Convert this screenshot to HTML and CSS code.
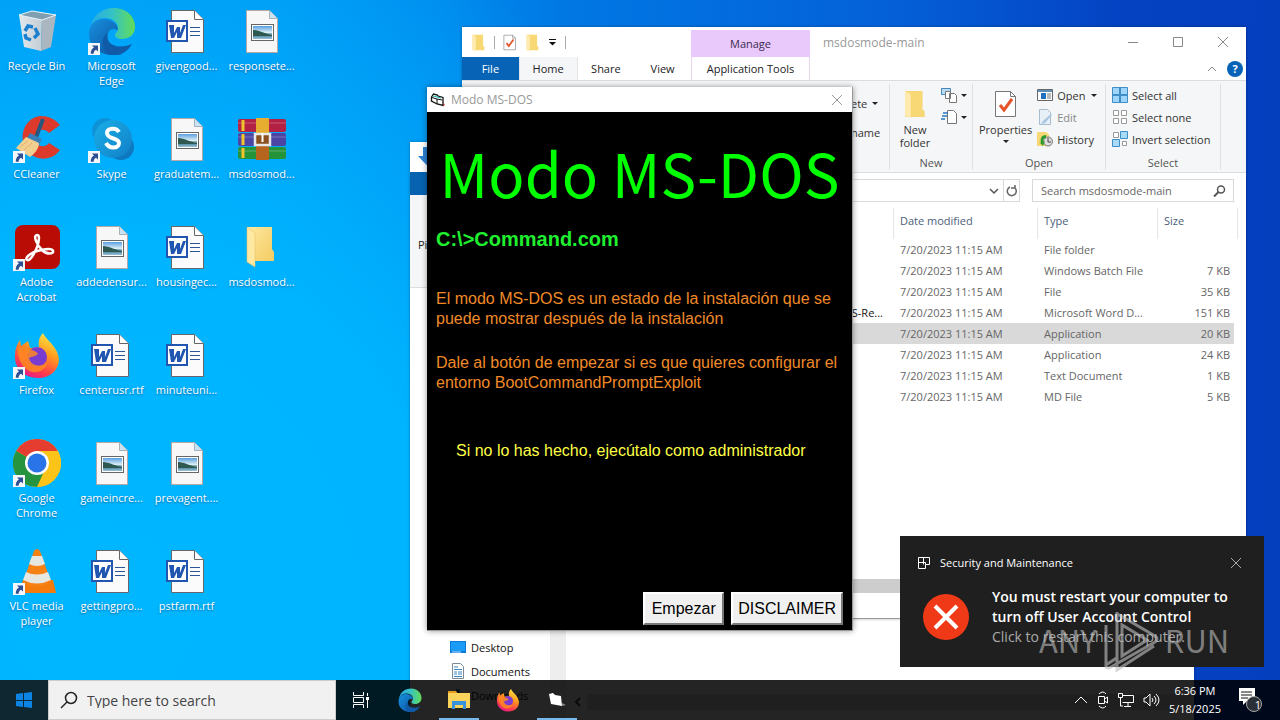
FILE: index.html
```html
<!DOCTYPE html>
<html lang="en">
<head>
<meta charset="utf-8">
<title>Desktop</title>
<link rel="stylesheet" href="styles.css">
</head>
<body>
<svg class="defs" aria-hidden="true">
  <defs>
    <linearGradient id="edgeA" x1="0" y1="0" x2="1" y2="0"><stop offset="0" stop-color="#25a9e8"/><stop offset=".5" stop-color="#35c3c5"/><stop offset="1" stop-color="#63dc55"/></linearGradient>
    <linearGradient id="edgeB" x1="0" y1="0" x2="1" y2="1"><stop offset="0" stop-color="#1691df"/><stop offset="1" stop-color="#0d4f9e"/></linearGradient>
    <linearGradient id="ff" x1=".8" y1="0" x2=".3" y2="1"><stop offset="0" stop-color="#fff04a"/><stop offset=".4" stop-color="#ff9a1f"/><stop offset=".75" stop-color="#ff3f4a"/><stop offset="1" stop-color="#e5178a"/></linearGradient>
    <linearGradient id="sky" x1="0" y1="0" x2="0" y2="1"><stop offset="0" stop-color="#5a9fe0"/><stop offset=".5" stop-color="#dbeef4"/><stop offset=".55" stop-color="#8fb6c4"/><stop offset=".75" stop-color="#4f8a9c"/><stop offset="1" stop-color="#9cc4de"/></linearGradient>
    <linearGradient id="skype" x1="0" y1="0" x2="1" y2="1"><stop offset="0" stop-color="#1aaee8"/><stop offset="1" stop-color="#1180c8"/></linearGradient>
    <linearGradient id="fold" x1="0" y1="0" x2="1" y2="1"><stop offset="0" stop-color="#ffe9a0"/><stop offset="1" stop-color="#f3cb62"/></linearGradient>
    <linearGradient id="bin" x1="0" y1="0" x2="1" y2="0"><stop offset="0" stop-color="#e3e9ed"/><stop offset="1" stop-color="#c3cdd4"/></linearGradient>

    <symbol id="shortcut" viewBox="0 0 12 12"><rect width="12" height="12" fill="#f4f7fa"/><path d="M4 2.500h6v6L8 6.700C6.300 7.600 5.600 9 5.700 10.700H2.800C2.600 8 3.800 5.800 6 4.600z" fill="#2c4f94"/></symbol>
    <symbol id="i-bin" viewBox="0 0 48 48"><path d="M6 8l23 5-1 31-17-4z" fill="url(#bin)"/><path d="M29 13l14-5-5 32-10 4z" fill="#aab7c0"/><path d="M6 8l13-4 24 4-14 5z" fill="#7f9eb0" stroke="#eef5f8"/><g fill="none" stroke="#1d80cf" stroke-width="3.500"><path d="M12 24l3-5 5 1M22 21l3 6-4 4M18 33l-5-2-1-4"/></g></symbol>
    <symbol id="i-edge" viewBox="0 0 48 48"><path d="M2 22C4 8 14 1 26 1c13 0 21 9 21 19 0 7-5 12-13 12-5 0-7-2-7-4 0-2 3-3 3-7 0-5-5-10-13-10C9 11 4 15 2 22z" fill="url(#edgeA)"/><path d="M1 25C2 17 8 12 16 12c8 0 14 5 14 11-8-3-11 2-10 9 1 8 7 14 15 15C14 52 0 41 1 25z" fill="url(#edgeB)"/><path d="M19 26c-2 9 7 18 25 11-4 7-10 11-18 11C13 47 12 32 19 26z" fill="#105aa7"/></symbol>
    <symbol id="i-word" viewBox="0 0 48 48"><path d="M8.500 3.500h23l9 9v33h-32z" fill="#fbfbfb" stroke="#666"/><path d="M31.500 3.500v9h9" fill="#fff" stroke="#666"/><path d="M27 20.500h10M27 24.500h10M27 28.500h10" stroke="#2b579a" stroke-width="1.200"/><rect x="4" y="14" width="20" height="20" fill="#fff" stroke="#2156b0" stroke-width="2"/><path d="M6 18h5v8l3-6h3v6l3-8h3l-5 13h-4v-6l-3 6H8z" fill="#2156b0"/></symbol>
    <symbol id="i-pic" viewBox="0 0 48 48"><path d="M8.500 3.500h23l8 8v34h-31z" fill="#f7f7f8" stroke="#b6a6a6"/><path d="M31.500 3.500v8h8" fill="#c9e3f2" stroke="#a6b2ba"/><rect x="13.500" y="17.500" width="22" height="16" fill="#fff" stroke="#666"/><rect x="15" y="19" width="19" height="13" fill="url(#sky)"/><path d="M15 23c6 0 12 4 19 5v1H15z" fill="#2f5950"/></symbol>
    <symbol id="i-cc" viewBox="0 0 48 48"><path d="M47 10C42 4 35 1 28 1 16 2 8 13 10 26c2 12 13 20 25 17 5-1 9-4 12-8L36 28c-5 6-13 3-14-4-1-8 8-13 14-6z" fill="#dd3a2c"/><path d="M30 4l-8 21" stroke="#28577e" stroke-width="4"/><path d="M17 18l12 6-3 6-13-5z" fill="#3a80b8"/><path d="M13 22l13 6c0 6-5 11-9 14L3 33z" fill="#f3cf8f"/><path d="M15 26l-8 6M19 28l-8 7" stroke="#dcb274"/></symbol>
    <symbol id="i-skype" viewBox="0 0 48 48"><circle cx="17" cy="16" r="13" fill="#0d92d8"/><circle cx="33" cy="32" r="13" fill="#0e78c0"/><circle cx="25" cy="24" r="19" fill="url(#skype)"/><path d="M31 17c-3-5-12-4-12 1 0 7 12 4 12 10 0 6-10 6-13 0" fill="none" stroke="#fff" stroke-width="4"/></symbol>
    <symbol id="i-rar" viewBox="0 0 48 48"><rect y="4" width="48" height="13" rx="2" fill="#b32244"/><rect y="18" width="48" height="13" rx="2" fill="#4c45a4"/><rect y="32" width="48" height="12" rx="2" fill="#25933a"/><path d="M0 8h48M0 22h48M0 36h48" stroke="#fff" opacity=".25"/><path d="M5 5v11M5 19v11M5 33v10" stroke="#f1c42c" stroke-width="3"/><rect x="18" y="3" width="13" height="42" fill="#b5651e"/><path d="M18 3h13v16H18z" fill="#e6ad31"/><path d="M17 19h15v11H17z" fill="#8d5020" stroke="#e8e8e8" stroke-width="2.500"/><path d="M24.500 18v9" stroke="#fff" stroke-width="2"/></symbol>
    <symbol id="i-pdf" viewBox="0 0 48 48"><rect x="2" y="2" width="45" height="44" rx="8" fill="#b80c05"/><path d="M24 12c-4 0-1 9 5 15 5 5 12 4 11 1-1-4-19-1-25 5-4 4 0 6 3 2 4-5 8-14 8-20 0-2-1-3-2-3z" fill="none" stroke="#fff" stroke-width="2.500"/></symbol>
    <symbol id="i-folder" viewBox="0 0 48 48"><path d="M9 4h25v22l2 3v9H17z" fill="url(#fold)"/><path d="M9 4l8 6v34l-8-5z" fill="#ffe8a2" stroke="#e4bd63" stroke-width=".500"/></symbol>
    <symbol id="i-ff" viewBox="0 0 48 48"><path d="M30 2c2 5 9 10 13 17 8 14-2 28-18 28C11 47 1 37 2 24c0-6 2-11 5-15l1 6 7-5 2 7c4 0 6-1 9-1-1-5 0-10 4-14z" fill="url(#ff)"/><circle cx="24" cy="26" r="10" fill="#7a3bd0"/><path d="M5 16c4 1 9 0 14 3 3 1 5 2 6 4-3 3-6 2-9 4 2 9 14 10 19 3-2 11-15 15-23 7C7 32 4 24 5 16z" fill="#ff8a20" opacity=".85"/></symbol>
    <symbol id="i-chrome" viewBox="0 0 48 48"><circle cx="24" cy="24" r="24" fill="#fcc419"/><path d="M24 24L3.200 12A24 24 0 0 1 44.800 12z" fill="#e53e30"/><path d="M3.200 12A24 24 0 0 0 24 48l9-20-9-4z" fill="#26943e"/><path d="M24 12h20.800A24 24 0 0 1 24 48l10-18z" fill="#fcc419"/><circle cx="24" cy="24" r="12" fill="#fff"/><circle cx="24" cy="24" r="9.500" fill="#2a74ea"/></symbol>
    <symbol id="i-vlc" viewBox="0 0 48 48"><path d="M10 33h30l3 13H5z" fill="#f57c0c"/><path d="M21 4q3-4 6 0l11 31q-14 9-28 0z" fill="#f68115"/><path d="M19 9h10l3 8q-8 4-16 0zM13 25q11 5 22 0l3 8q-14 7-28 0z" fill="#e7e7e2"/></symbol>
    <symbol id="i-page" viewBox="0 0 24 28"><path d="M1.500 1.500h15l5 5v20h-20z" fill="#fff" stroke="#777"/><path d="M16.500 1.500v5h5" fill="none" stroke="#777"/><path d="M6 15l4 5 8-11" fill="none" stroke="#e5532c" stroke-width="3"/></symbol>
    <symbol id="i-fold2" viewBox="0 0 20 26"><path d="M1 1h16v17l2 2v5H1z" fill="#f8d775"/><path d="M1 1l5 3v22l-5-2z" fill="#ffebb0"/></symbol>
    <symbol id="i-desk" viewBox="0 0 16 14"><rect y="1" width="16" height="12" fill="#0c7ad8"/><rect x="1" y="2" width="14" height="9" fill="#1a9bf5"/><path d="M2 12h9" stroke="#bfe3ff"/></symbol>
    <symbol id="i-doc" viewBox="0 0 16 18"><path d="M2.500 1.500h8l3 3v12h-11z" fill="#fff" stroke="#7b8a96"/><path d="M4 5h4M4 7.500h8M4 10h3M8 10h4M4 12h3M8 12h4M4 14.500h8" stroke="#3b86c4"/></symbol>
    <symbol id="i-vb" viewBox="0 0 16 16"><path d="M1.500 5l2-3 4 1 .500 1 5 1.500v8l-6-1.500-5.500-3z" fill="#fff" stroke="#111" stroke-width="1.300"/><path d="M2 5.500l5 1.500 5 1M7 7v5" fill="none" stroke="#111"/><path d="M3 4l8 2" stroke="#18b0a8"/><path d="M13 11l2 2-2 1z" fill="#a33"/></symbol>
    <symbol id="i-x" viewBox="0 0 12 12"><path d="M1 1l10 10M11 1L1 11" fill="none" stroke="currentColor"/></symbol>
  </defs>
</svg>

<main class="desktop">
  <nav class="icons" aria-label="Desktop icons">
    <button class="icon"><span class="art"><svg><use href="#i-bin"/></svg></span><span>Recycle Bin</span></button>
    <button class="icon"><span class="art"><svg><use href="#i-cc"/></svg><svg class="link"><use href="#shortcut"/></svg></span><span>CCleaner</span></button>
    <button class="icon"><span class="art"><svg><use href="#i-pdf"/></svg><svg class="link"><use href="#shortcut"/></svg></span><span>Adobe Acrobat</span></button>
    <button class="icon"><span class="art"><svg><use href="#i-ff"/></svg><svg class="link"><use href="#shortcut"/></svg></span><span>Firefox</span></button>
    <button class="icon"><span class="art"><svg><use href="#i-chrome"/></svg><svg class="link"><use href="#shortcut"/></svg></span><span>Google Chrome</span></button>
    <button class="icon"><span class="art"><svg><use href="#i-vlc"/></svg><svg class="link"><use href="#shortcut"/></svg></span><span>VLC media player</span></button>

    <button class="icon"><span class="art"><svg><use href="#i-edge"/></svg><svg class="link"><use href="#shortcut"/></svg></span><span>Microsoft Edge</span></button>
    <button class="icon"><span class="art"><svg><use href="#i-skype"/></svg><svg class="link"><use href="#shortcut"/></svg></span><span>Skype</span></button>
    <button class="icon"><span class="art"><svg><use href="#i-pic"/></svg></span><span>addedensur...</span></button>
    <button class="icon"><span class="art"><svg><use href="#i-word"/></svg></span><span>centerusr.rtf</span></button>
    <button class="icon"><span class="art"><svg><use href="#i-pic"/></svg></span><span>gameincre...</span></button>
    <button class="icon"><span class="art"><svg><use href="#i-word"/></svg></span><span>gettingpro...</span></button>

    <button class="icon"><span class="art"><svg><use href="#i-word"/></svg></span><span>givengood...</span></button>
    <button class="icon"><span class="art"><svg><use href="#i-pic"/></svg></span><span>graduatem...</span></button>
    <button class="icon"><span class="art"><svg><use href="#i-word"/></svg></span><span>housingec...</span></button>
    <button class="icon"><span class="art"><svg><use href="#i-word"/></svg></span><span>minuteuni...</span></button>
    <button class="icon"><span class="art"><svg><use href="#i-pic"/></svg></span><span>prevagent....</span></button>
    <button class="icon"><span class="art"><svg><use href="#i-word"/></svg></span><span>pstfarm.rtf</span></button>

    <button class="icon"><span class="art"><svg><use href="#i-pic"/></svg></span><span>responsete...</span></button>
    <button class="icon"><span class="art"><svg><use href="#i-rar"/></svg></span><span>msdosmod...</span></button>
    <button class="icon"><span class="art"><svg><use href="#i-folder"/></svg></span><span>msdosmod...</span></button>
  </nav>

  <section class="window back" aria-label="Explorer">
    <div class="back-title"><svg width="20" height="20" viewBox="0 0 20 20"><path d="M7 1h7v9h5l-8.500 9L2 10h5z" fill="#2c82d2"/></svg></div>
    <div class="back-tabs"></div>
    <div class="back-ribbon">Pi</div>
    <div class="back-body">
      <div class="back-nav">
        <a href="#"><svg width="16" height="14"><use href="#i-desk"/></svg>Desktop</a>
        <a href="#"><svg width="16" height="18"><use href="#i-doc"/></svg>Documents</a>
        <a href="#"><svg width="16" height="16" viewBox="0 0 16 16"><path d="M6 2h4v6h4l-6 6-6-6h4z" fill="#2c82d2"/></svg>Downloads</a>
      </div>
      <div class="back-scroll"></div>
      <div class="back-files"><div class="back-hscroll"><svg width="12" height="12" viewBox="0 0 12 12"><path d="M8 2L4 6l4 4" fill="none" stroke="#444" stroke-width="2"/></svg><i></i></div></div>
    </div>
  </section>

  <section class="window front" aria-label="msdosmode-main">
    <header class="head">
      <div class="head-left">
        <div class="qat">
          <svg width="15" height="17"><use href="#i-fold2"/></svg><i></i>
          <svg width="14" height="17"><use href="#i-page"/></svg>
          <svg width="15" height="17"><use href="#i-fold2"/></svg>
          <svg width="9" height="8" viewBox="0 0 9 8"><path d="M1 1.500h7" stroke="#111"/><path d="M1 4h7L4.500 7.500z" fill="#111"/></svg><i></i>
        </div>
        <div class="tabs"><button class="tab file">File</button><button class="tab home">Home</button><button class="tab">Share</button><button class="tab">View</button></div>
      </div>
      <div class="manage"><div class="manage-top">Manage</div><button class="tab">Application Tools</button></div>
      <div class="head-right">
        <div class="caption"><span>msdosmode-main</span>
          <div class="controls">
            <button aria-label="Minimize"><svg width="12" height="12" viewBox="0 0 12 12"><path d="M1 6.500h10" stroke="currentColor"/></svg></button>
            <button aria-label="Maximize"><svg width="12" height="12" viewBox="0 0 12 12"><path d="M1.500 1.500h9v9h-9z" fill="none" stroke="currentColor"/></svg></button>
            <button aria-label="Close"><svg width="12" height="12"><use href="#i-x"/></svg></button>
          </div>
        </div>
        <div class="help"><svg width="10" height="6" viewBox="0 0 10 6"><path d="M1 5l4-4 4 4" fill="none" stroke="#888"/></svg><button aria-label="Help">?</button></div>
      </div>
    </header>

    <div class="ribbon">
      <div class="group organize"><div class="cut"><span>ete <b class="arr"></b></span><span>name</span></div></div>
      <div class="group new">
        <div class="group-body">
          <button class="big"><svg width="22" height="28"><use href="#i-fold2"/></svg>New<br>folder</button>
          <div class="stack">
            <button aria-label="New item"><svg width="16" height="16" viewBox="0 0 16 16"><path d="M.500 1.500h9v6h-9z" fill="#b8dcf4" stroke="#4687b8"/><path d="M4.500 4.500h5v7h-5zM8.500 6.500h5l2 2v7h-7z" fill="#fff" stroke="#777"/></svg><b class="arr"></b></button>
            <button aria-label="Easy access"><svg width="16" height="16" viewBox="0 0 16 16"><path d="M6.500 1.500h6l3 3v10h-9z" fill="#fff" stroke="#777"/><path d="M2 4h5M1 7h5M0 10h4" stroke="#2a77c0" fill="none" stroke-width="1.500"/></svg><b class="arr"></b></button>
          </div>
        </div>
        <div class="caption-s">New</div>
      </div>
      <div class="group open">
        <div class="group-body">
          <button class="big"><svg width="24" height="28"><use href="#i-page"/></svg>Properties<b class="arr"></b></button>
          <div class="stack">
            <button><svg width="16" height="14" viewBox="0 0 16 14"><path d="M.500 1.500h15v11H.500z" fill="#fff" stroke="#666"/><path d="M1 2h14v2H1z" fill="#5c8fb9"/><path d="M4 5h5v6H4z" fill="#1f70c0"/><path d="M10 6h4M10 8h4M10 10h4" stroke="#777"/></svg>Open <b class="arr"></b></button>
            <button class="dim"><svg width="16" height="16" viewBox="0 0 16 16"><path d="M2.500.500h8l3 3v12h-11z" fill="#e7eff7" stroke="#a8bccd"/><path d="M14 5l-8 7-2 3 4-1 7-8z" fill="#a8c5e0"/></svg>Edit</button>
            <button><svg width="16" height="16" viewBox="0 0 16 16"><path d="M0 1h9l3 3v11H0z" fill="#f7d774"/><circle cx="11" cy="10.500" r="4.500" fill="#ddd" stroke="#777"/><path d="M11 7v4h3" fill="none" stroke="#444"/><path d="M9 4C4 4 3 8 4 12l-2-1 4 4 2-5-2 1c0-3 1-4 3-4z" fill="#2c9b32"/></svg>History</button>
          </div>
        </div>
        <div class="caption-s">Open</div>
      </div>
      <div class="group select">
        <div class="group-body"><div class="stack">
          <button><svg width="16" height="16" viewBox="0 0 16 16"><path d="M.500.500h15v15H.500z" fill="#9fd5fa" stroke="#3f8ec6"/><path d="M8 0v16M0 8h16" stroke="#3f8ec6" stroke-width="2"/></svg>Select all</button>
          <button><svg width="16" height="16" viewBox="0 0 16 16"><path d="M1.500 1.500h5v5h-5zM9.500 1.500h5v5h-5zM1.500 9.500h5v5h-5zM9.500 9.500h5v5h-5z" fill="#fff" stroke="#999"/></svg>Select none</button>
          <button><svg width="16" height="16" viewBox="0 0 16 16"><path d="M1.500 1.500h5v5h-5zM10.500 10.500h4v4h-4z" fill="#fff" stroke="#999"/><path d="M8.500.500h7v7h-7zM.500 8.500h7v7h-7z" fill="#a8dafa" stroke="#3f8ec6"/></svg>Invert selection</button>
        </div></div>
        <div class="caption-s">Select</div>
      </div>
    </div>

    <div class="address">
      <div class="path"><svg width="10" height="8" viewBox="0 0 10 8"><path d="M1 2l4 4 4-4" fill="none" stroke="#555" stroke-width="1.500"/></svg><button aria-label="Refresh"><svg width="12" height="12" viewBox="0 0 12 12"><path d="M4 2a4.500 4.500 0 1 0 5 1M5 3h4V0" fill="none" stroke="#666" stroke-width="1.500"/></svg></button></div>
      <div class="find"><input aria-label="Search" placeholder="Search msdosmode-main"><svg width="14" height="12" viewBox="0 0 14 12"><circle cx="9" cy="4.500" r="3.500" fill="none" stroke="#555" stroke-width="1.500"/><path d="M6.500 7L2 11.500" stroke="#555" stroke-width="2"/></svg></div>
    </div>

    <table class="files">
      <colgroup><col><col class="c-date"><col class="c-type"><col class="c-size"></colgroup>
      <thead><tr><th></th><th>Date modified</th><th>Type</th><th>Size</th></tr></thead>
      <tbody>
        <tr><td></td><td>7/20/2023 11:15 AM</td><td>File folder</td><td></td></tr>
        <tr><td></td><td>7/20/2023 11:15 AM</td><td>Windows Batch File</td><td>7 KB</td></tr>
        <tr><td></td><td>7/20/2023 11:15 AM</td><td>File</td><td>35 KB</td></tr>
        <tr><td>S-Re...</td><td>7/20/2023 11:15 AM</td><td>Microsoft Word D...</td><td>151 KB</td></tr>
        <tr class="sel"><td></td><td>7/20/2023 11:15 AM</td><td>Application</td><td>20 KB</td></tr>
        <tr><td></td><td>7/20/2023 11:15 AM</td><td>Application</td><td>24 KB</td></tr>
        <tr><td></td><td>7/20/2023 11:15 AM</td><td>Text Document</td><td>1 KB</td></tr>
        <tr><td></td><td>7/20/2023 11:15 AM</td><td>MD File</td><td>5 KB</td></tr>
      </tbody>
    </table>
    <div class="hscroll"></div>
    <div class="status"></div>
  </section>

  <section class="window dialog" aria-label="Modo MS-DOS">
    <header class="dialog-title"><svg width="16" height="16"><use href="#i-vb"/></svg><span>Modo MS-DOS</span><button aria-label="Close"><svg width="12" height="12"><use href="#i-x"/></svg></button></header>
    <div class="dos">
      <h1>Modo MS-DOS</h1>
      <p class="cmd">C:\&gt;Command.com</p>
      <p class="orange">El modo MS-DOS es un estado de la instalación que se<br>puede mostrar después de la instalación</p>
      <p class="orange">Dale al botón de empezar si es que quieres configurar el<br>entorno BootCommandPromptExploit</p>
      <p class="yellow">Si no lo has hecho, ejecútalo como administrador</p>
      <div class="actions"><button>Empezar</button><button>DISCLAIMER</button></div>
    </div>
  </section>

  <aside class="toast">
    <div class="toast-head"><svg width="12" height="12" viewBox="0 0 12 12"><path d="M.500.500h11v7h-4v4h-7zM5.500.500v7M.500 5.500h7v2" fill="none" stroke="#fff"/></svg><span>Security and Maintenance</span><button aria-label="Dismiss"><svg width="12" height="12"><use href="#i-x"/></svg></button></div>
    <div class="toast-body">
      <svg width="46" height="46" viewBox="0 0 46 46"><circle cx="23" cy="23" r="23" fill="#f03a17"/><path d="M12 12l22 22M34 12L12 34" stroke="#fff" stroke-width="4"/></svg>
      <div><strong>You must restart your computer to<br>turn off User Account Control</strong><p>Click to restart this computer.</p></div>
    </div>
  </aside>
  <div class="mark" aria-hidden="true"><span>ANY</span><svg width="56" height="64" viewBox="0 0 56 64"><path d="M14 4v45M3 17v40l12-8M3 57q0 5 5 2l44-25q4-3 0-6L18 8q-4-3-4 2v52l37-24M19 17v31l25-16z" fill="none" stroke="currentColor" stroke-width="3"/></svg><span>RUN</span></div>
</main>

<footer class="taskbar">
  <button class="start" aria-label="Start"><svg width="16" height="16" viewBox="0 0 16 16"><path d="M0 2l7-1v7H0zM8 1l8-1v8H8zM0 9h7v6l-7-1zM8 9h8v7l-8-1z" fill="#0b84e4"/></svg></button>
  <label class="search"><svg width="18" height="18" viewBox="0 0 18 18"><circle cx="11" cy="7" r="5.500" fill="none" stroke="#222" stroke-width="1.500"/><path d="M7 11L1 17" stroke="#222" stroke-width="1.500"/></svg><input aria-label="Type here to search" placeholder="Type here to search"></label>
  <button class="app" aria-label="Task view"><svg width="18" height="16" viewBox="0 0 18 16"><path d="M1.500 0v3.500h10V0M1.500 16v-3.500h10V16M1.500 5.500h10v5h-10zM15.500 1v3M15.500 8v8" fill="none" stroke="#fff"/><path d="M14 5h3v3h-3z" fill="#fff"/></svg></button>
  <button class="app" aria-label="Edge"><svg width="24" height="24"><use href="#i-edge"/></svg></button>
  <button class="app running" aria-label="File Explorer"><svg width="22" height="20" viewBox="0 0 22 20"><path d="M0 1h8l2 3H0z" fill="#e59b1b"/><path d="M0 3h22v15H0z" fill="#fbd35c"/><path d="M4 19v-8h14v8h-3v-4H7v4z" fill="#3a92dc"/></svg></button>
  <button class="app" aria-label="Firefox"><svg width="24" height="24"><use href="#i-ff"/></svg></button>
  <button class="app running" aria-label="Modo MS-DOS"><svg width="20" height="18" viewBox="0 0 20 18"><path d="M2 3l4-1 2 2 6 1 1 10-11-2z" fill="#fff"/><path d="M15 12l4 2-4 1z" fill="#888"/></svg></button>
  <div class="tray">
    <svg width="14" height="8" viewBox="0 0 14 8"><path d="M1 7l6-6 6 6" fill="none" stroke="#fff"/></svg>
    <svg width="12" height="18" viewBox="0 0 12 18"><path d="M1.500 5.500h6v7h-6zM7.500 8l3-2v6l-3-2M2 3q4-4 7 0M2 15q4 4 7 0" fill="none" stroke="#fff"/></svg>
    <svg width="16" height="14" viewBox="0 0 16 14"><path d="M4.500 2.500h11v7h-11M10 10v3M6 13.500h7M.500.500h4v4h-4zM2.500 5v8H5" fill="none" stroke="#fff"/></svg>
    <svg width="17" height="14" viewBox="0 0 17 14"><path d="M1 5h2l4-4v12L3 9H1zM9 5q2 2 0 4M11 3q4 4 0 8M13 1q6 6 0 12" fill="none" stroke="#fff"/></svg>
    <time class="clock">6:36 PM<br>5/18/2025</time>
    <button class="notify" aria-label="Notifications"><svg width="24" height="26" viewBox="0 0 24 26"><path d="M1 1h16v13H9l-4 4v-4H1z" fill="#fff"/><path d="M3 5h11M3 8h11M3 11h7" stroke="#111"/><circle cx="16" cy="17" r="7.500" fill="#2b2f38" stroke="#aaa"/></svg><span>1</span></button>
  </div>
</footer>
</body>
</html>
```
FILE: styles.css
```css
* { box-sizing: border-box; }
body {
  margin: 0;
  min-height: 100vh;
  display: flex;
  flex-direction: column;
  position: relative;
  overflow: hidden;
  font: 11px/15px "Open Sans", "Noto Sans", sans-serif;
  color: #222;
  background:
    radial-gradient(ellipse 700px 760px at 100px 620px, #00b6ff 0, #00b4ff 50%, rgba(0, 176, 255, 0) 100%),
    linear-gradient(90deg, #0098f2 0, #0098f4 22%, #008cee 34%, #0078e4 44%, #0560d8 70%, #0442c2 88%, #043fbe 100%);
}
button { font: inherit; color: inherit; background: none; border: 0; padding: 0; margin: 0; }
input { font: inherit; border: 0; background: none; padding: 0; min-width: 0; flex: 1; outline: 0; }
svg { flex: none; display: block; }
p, h1 { margin: 0; }
a { color: inherit; text-decoration: none; }
.defs { position: absolute; width: 0; height: 0; }

.desktop { flex: 1; }
.icons {
  display: grid;
  grid-auto-flow: column;
  grid-template-rows: repeat(6, 108px);
  grid-auto-columns: 75px;
  justify-content: start;
}
.icon { display: flex; flex-direction: column; align-items: center; gap: 3px; padding: 7px 4px 0 2px; color: #fff; text-shadow: 0 1px 2px rgba(0, 50, 100, .6); white-space: nowrap; }
.icon > span:last-child { white-space: normal; max-width: 75px; }
.art { position: relative; width: 48px; height: 48px; }
.art svg { width: 48px; height: 48px; }
.art .link { position: absolute; left: 0; bottom: 0; width: 12px; height: 12px; }

.window { position: absolute; display: flex; flex-direction: column; background: #fff; box-shadow: 0 0 3px rgba(0, 0, 0, .3); }

.back { left: 410px; top: 142px; width: 784px; height: 578px; }
.back-title { height: 30px; padding: 4px 6px; }
.back-tabs { height: 23px; width: 56px; background: #0763b0; }
.back-ribbon { height: 93px; padding: 42px 8px 0; background: #f5f6f7; border-bottom: 1px solid #ddd; }
.back-body { flex: 1; display: flex; }
.back-nav { width: 140px; display: flex; flex-direction: column; justify-content: flex-end; padding: 0 0 13px 40px; color: #111; }
.back-nav a { display: flex; align-items: center; gap: 5px; height: 24px; }
.back-scroll { width: 16px; background: #eee; }
.back-files { flex: 1; display: flex; align-items: flex-end; }
.back-hscroll { flex: 1; display: flex; align-items: center; gap: 3px; height: 16px; margin: 0 0 10px 6px; }
.back-hscroll i { flex: 1; height: 16px; background: #ddd; }

.front { left: 462px; top: 27px; width: 784px; height: 592px; border-bottom: 1px solid #999; }
.head { display: flex; border-bottom: 1px solid #dcdcdc; }
.head-left { width: 229px; }
.qat { height: 30px; display: flex; align-items: center; gap: 8px; padding-left: 9px; }
.qat i { width: 1px; height: 13px; background: #aaa; }
.tabs { display: flex; }
.tab { height: 23px; flex: 1; }
.file { background: #0763b5; color: #fff; }
.home { background: #f5f6f7; border: 1px solid #e3e5e8; border-width: 0 1px; }
.manage { width: 119px; display: flex; flex-direction: column; }
.manage-top { height: 27px; margin-top: 3px; background: #e9c8fb; text-align: center; line-height: 28px; color: #3a2a50; }
.manage .tab { border: solid #e8d6f2; border-width: 0 1px; flex: none; }
.head-right { flex: 1; }
.caption { height: 30px; display: flex; align-items: center; padding-left: 13px; color: #999; font-size: 12px; }
.controls { margin-left: auto; display: flex; padding-right: 1px; color: #888; }
.controls button { width: 45px; display: flex; justify-content: center; }
.help { display: flex; align-items: center; justify-content: flex-end; gap: 10px; height: 23px; padding-right: 3px; }
.help button { width: 16px; height: 16px; border-radius: 8px; background: #0763b5; color: #fff; font-weight: 700; }

.ribbon { display: flex; height: 92px; background: #f5f6f7; border-bottom: 1px solid #ddd; padding: 3px 25px 2px 0; color: #333; }
.group { border-right: 1px solid #e0e1e3; display: flex; flex-direction: column; justify-content: space-between; }
.organize { flex: 1; }
.cut { display: flex; flex-direction: column; gap: 14px; align-items: flex-end; padding: 12px 9px 0 0; }
.cut span { width: 29px; display: flex; align-items: center; gap: 3px; }
.group-body { display: flex; gap: 5px; padding: 0 6px; }
.new { width: 83px; }
.new .group-body { gap: 9px; padding-left: 8px; }
.open { width: 133px; }
.select { width: 115px; }
.big { display: flex; flex-direction: column; align-items: center; justify-content: flex-start; padding-top: 6px; line-height: 13px; min-width: 34px; }
.big svg { margin-bottom: 5px; }
.stack { display: flex; flex-direction: column; }
.stack button { height: 22px; display: flex; align-items: center; gap: 4px; white-space: nowrap; }
.dim { color: #888; }
.arr { display: inline-block; border: 3px solid transparent; border-top-color: #222; border-bottom: 0; margin-left: 2px; }
.stack [aria-label] .arr { margin-left: 0; }
.big .arr { margin: 4px 0 0; }
.caption-s { text-align: center; color: #555; }

.address { display: flex; gap: 12px; padding: 6px 12px 6px 0; height: 35px; }
.path { flex: 1; display: flex; align-items: center; justify-content: flex-end; gap: 4px; border: 1px solid #d9d9d9; }
.path button { border-left: 1px solid #d9d9d9; height: 21px; width: 16px; display: flex; align-items: center; justify-content: center; }
.find { width: 202px; display: flex; align-items: center; border: 1px solid #d9d9d9; padding: 0 7px 0 8px; }
.find input::placeholder { color: #666; opacity: 1; }

.files { table-layout: fixed; border-collapse: separate; border-spacing: 0; width: 776px; color: #666; }
.c-date { width: 144px; }
.c-type { width: 120px; }
.c-size { width: 80px; }
.files th { text-align: left; font-weight: 400; color: #4c607a; height: 31px; padding: 0 6px 6px; border-right: 1px solid #e5e5e5; }
.files td { height: 21px; padding: 0 6px; white-space: nowrap; }
.files td:first-child { text-align: right; color: #111; padding-right: 11px; }
.files td:last-child { text-align: right; padding-right: 8px; }
.sel { background: linear-gradient(#d9d9d9, #d9d9d9) left / calc(100% - 4px) 100% no-repeat; }
.hscroll { margin-top: auto; height: 14px; background: #cdcdcd; }
.status { height: 25px; }

.dialog { left: 427px; top: 87px; width: 426px; height: 544px; border: 1px solid #999; border-width: 0 1px 1px 0; box-shadow: 0 0 6px rgba(0, 0, 0, .4); }
.dialog-title { height: 25px; display: flex; align-items: center; gap: 5px; padding: 0 9px 0 3px; color: #999; font-size: 12px; }
.dialog-title span { flex: 1; }
.dos { flex: 1; display: flex; flex-direction: column; background: #000; padding: 16px 9px 5px; font: 16px/20px "Liberation Sans", Arial, sans-serif; }
.dos h1 { font: 400 60px/88px "Noto Sans CJK JP", "Liberation Sans", sans-serif; color: #0f0; white-space: nowrap; text-align: center; }
.cmd { font-size: 20px; font-weight: 700; line-height: 22px; color: #1fef2f; margin: 12px 0 39px; }
.orange { color: #f08a28; margin-bottom: 24px; white-space: nowrap; }
.yellow { color: #ffff45; margin: 24px 20px 0; white-space: nowrap; }
.actions { margin-top: auto; display: flex; justify-content: flex-end; gap: 7px; }
.actions button { height: 33px; padding: 0 5px; min-width: 81px; background: #f0f0f0; color: #000; border: 2px solid; border-color: #fff #777 #777 #fff; }

.toast { position: absolute; right: 16px; top: 536px; width: 364px; height: 131px; background: #1f1f1f; color: #fff; padding: 18px 22px 0 18px; }
.toast-head { display: flex; align-items: center; gap: 10px; height: 17px; }
.toast-head button { margin-left: auto; color: #aaa; }
.toast-body { display: flex; gap: 23px; padding: 16px 0 0 5px; font-size: 14px; line-height: 20px; white-space: nowrap; align-items: center; }
.toast strong { font-weight: 600; }
.toast p { color: #aaa; }
.mark { position: absolute; left: 1039px; top: 608px; display: flex; align-items: center; gap: 6px; color: rgba(190, 190, 190, .62); font: 31px/64px "Noto Sans CJK JP", "Liberation Sans", sans-serif; }

.taskbar { position: relative; height: 40px; display: flex; background: rgba(0, 0, 0, .86); color: #fff; }
.taskbar button { display: flex; align-items: center; justify-content: center; }
.start { width: 48px; background: rgba(255, 255, 255, .06); }
.search { width: 288px; background: #f1f1f1; border: 1px solid #ccc; display: flex; align-items: center; gap: 9px; padding: 0 11px; font-size: 14px; }
.search input::placeholder { color: #444; opacity: 1; }
.app { width: 49px; }
.running { background: linear-gradient(#76b9ed, #76b9ed) center bottom / 40px 2px no-repeat; }
.tray { margin-left: auto; display: flex; align-items: center; gap: 9px; padding-right: 10px; }
.clock { font-size: 11px; line-height: 18px; text-align: center; }
.notify { position: relative; width: 40px; }
.notify span { position: absolute; right: 5px; bottom: 0; width: 14px; font-size: 11px; line-height: 16px; }
```
